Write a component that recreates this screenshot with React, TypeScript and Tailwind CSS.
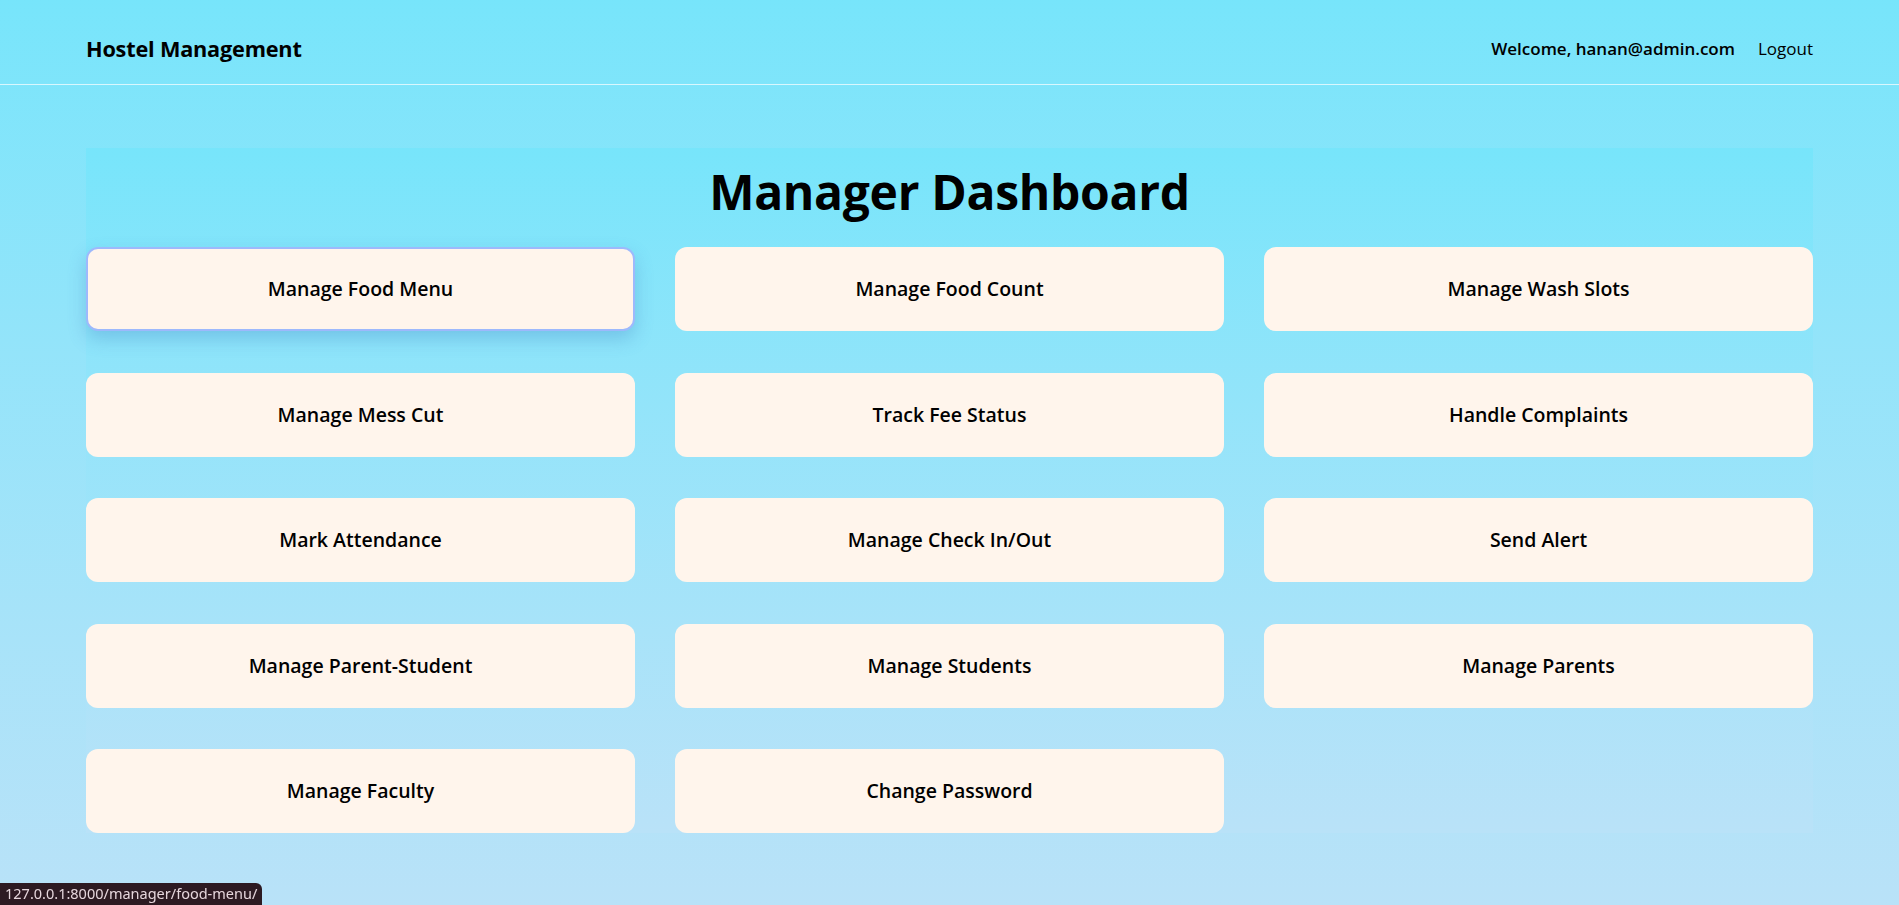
const menuItems = [
  { label: 'Manage Food Menu', active: true },
  { label: 'Manage Food Count' },
  { label: 'Manage Wash Slots' },
  { label: 'Manage Mess Cut' },
  { label: 'Track Fee Status' },
  { label: 'Handle Complaints' },
  { label: 'Mark Attendance' },
  { label: 'Manage Check In/Out' },
  { label: 'Send Alert' },
  { label: 'Manage Parent-Student' },
  { label: 'Manage Students' },
  { label: 'Manage Parents' },
  { label: 'Manage Faculty' },
  { label: 'Change Password' },
];

export default function App() {
  return (
    <div className="min-h-screen bg-gradient-to-b from-[#77e5fb] to-[#b9e2f8] font-['Open_Sans',sans-serif] text-black">
      {/* Navbar */}
      <header className="h-[85px] border-b border-white/70 px-[86px] pt-[14px] flex items-center justify-between">
        <span className="text-[21.7px] font-bold tracking-[-0.2px]">Hostel Management</span>
        <div className="flex items-center gap-[23px]">
          <span className="text-[17px] font-semibold">Welcome, hanan@admin.com</span>
          <a href="#" className="text-[17px]">Logout</a>
        </div>
      </header>

      {/* Dashboard */}
      <main className="px-[86px] pt-[63px] pb-16">
        <div className="bg-gradient-to-b from-[#77e5fb] to-[#b9e2f8]">
          <h1 className="py-5 text-center text-[48px] leading-[48px] font-bold tracking-[-0.3px]">
            Manager Dashboard
          </h1>
          <div className="mt-[11px] grid grid-cols-3 gap-x-10 gap-y-[41.5px]">
            {menuItems.map((item) => (
              <a
                key={item.label}
                href="#"
                className={`h-[84px] rounded-xl bg-[#fff5ec] flex items-center justify-center text-[19.5px] font-semibold ${
                  item.active ? 'border-2 border-[#9db9fc] shadow-[0_8px_18px_rgba(60,120,190,0.3)]' : ''
                }`}
              >
                {item.label}
              </a>
            ))}
          </div>
        </div>
      </main>

      {/* Browser status bar */}
      <div className="fixed bottom-0 left-0 h-[22px] px-[5px] flex items-center bg-[#2d1a22] rounded-tr-md text-[14.5px] text-[#e6d6dc] font-['Noto_Sans',sans-serif]">
        127.0.0.1:8000/manager/food-menu/
      </div>
    </div>
  );
}
